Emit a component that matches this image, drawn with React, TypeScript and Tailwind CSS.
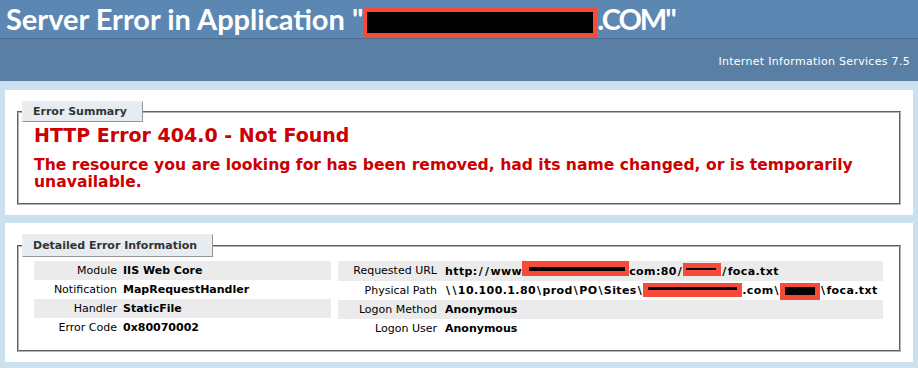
// IIS 7.5 style "Server Error" page, 404.0 with redacted host names

type Row = { label: string; value: React.ReactNode }

function Redact({ w, h, barH, barL, barR, barT, drop = 0 }: { w: number; h: number; barH: number; barL: number; barR: number; barT: number; drop?: number }) {
  return (
    <span className="inline-block bg-[#f74b3a]" style={{ width: w, height: h, verticalAlign: -drop }}>
      <span className="block bg-black" style={{ height: barH, marginLeft: barL, marginRight: barR, marginTop: barT }} />
    </span>
  )
}

// verdana's slashes are much wider than dejavu's
const S = () => <span className="mx-[1px]">/</span>
const B = () => <span className="mx-[1px]">\</span>

const left: Row[] = [
  { label: 'Module', value: 'IIS Web Core' },
  { label: 'Notification', value: 'MapRequestHandler' },
  { label: 'Handler', value: 'StaticFile' },
  { label: 'Error Code', value: '0x80070002' },
]

const right: Row[] = [
  {
    label: 'Requested URL',
    value: (
      <span className="tracking-[0.4px]">
        http:<S /><S />www
        <Redact w={107} h={15} barH={4} barL={7} barR={4} barT={6} drop={1} />
        com:80<S />
        <Redact w={38} h={13} barH={2} barL={3} barR={5} barT={5} drop={1} />
        <S />foca.txt
      </span>
    ),
  },
  {
    label: 'Physical Path',
    value: (
      <span className="tracking-[0.4px]">
        <B /><B />10.100.1.80<B />prod<B />PO<B />Sites<B />
        <Redact w={99} h={14} barH={3} barL={5} barR={5} barT={4} drop={3} />
        .com<B />
        <Redact w={40} h={17} barH={8} barL={5} barR={5} barT={4} drop={6} />
        <B />foca.txt
      </span>
    ),
  },
  { label: 'Logon Method', value: 'Anonymous' },
  { label: 'Logon User', value: 'Anonymous' },
]

function DetailTable({ rows, thW }: { rows: Row[]; thW: string }) {
  return (
    <table className="w-full border-collapse">
      <tbody>
        {rows.map((r, i) => (
          <tr key={r.label} className={i % 2 === 0 ? 'bg-[#ebebeb]' : ''}>
            <th className={`${thW} text-right font-normal align-top h-[19px] py-0 leading-[19px] whitespace-nowrap`}>{r.label}</th>
            <td className="font-bold align-top leading-[19px] whitespace-nowrap">{r.value}</td>
          </tr>
        ))}
      </tbody>
    </table>
  )
}

export default function App() {
  return (
    <div className="min-h-[368px] bg-[#cbe1ef] font-['DejaVu_Sans',Verdana,sans-serif] text-[11px] text-black">
      <div className="h-[38px] bg-[#5c87b2] pl-[6px]">
        <h1 className="m-0 text-white font-['Lato',sans-serif] font-bold text-[29px] leading-[38px] whitespace-nowrap">
          Server Error in Application "
          <span className="inline-block align-[-7px] w-[234px] h-[29px] bg-black border-[4px] border-[#f74b3a]" />
          <span className="tracking-[-2px]">.COM</span>"
        </h1>
      </div>
      <div className="h-[43px] border-t border-[#4a6c8e] bg-[#5a7fa5] flex items-center justify-end pr-[8px] pt-[5px] text-white tracking-[0.3px]">
        Internet Information Services 7.5
      </div>

      <div className="flex flex-col gap-[8px] px-[5px] pt-[9px] pb-[6px]">
        <div className="bg-white h-[125px] px-[12px] pt-[11px]">
          <fieldset className="border-2 [border-style:groove] border-[#b4b4b4] px-[15px] pb-[8px] h-[104px]">
            <legend className="ml-[-12px] pl-[10px] pr-[15px] h-[21px] leading-[19px] bg-[#e7ecf0] border border-t-[#ededed] border-l-[#ededed] border-r-[#969696] border-b-[#969696] text-[#333] font-bold">
              Error Summary
            </legend>
            <h2 className="m-0 mt-[1px] text-[#cc0000] font-bold text-[19px] leading-[24px]">HTTP Error 404.0 - Not Found</h2>
            <h3 className="m-0 mt-[10px] text-[#cc0000] font-bold text-[15.6px] leading-[17px]">
              The resource you are looking for has been removed, had its name changed, or is temporarily unavailable.
            </h3>
          </fieldset>
        </div>

        <div className="bg-white h-[139px] px-[12px] pt-[11px]">
          <fieldset className="border-2 [border-style:groove] border-[#b4b4b4] px-[15px] h-[118px]">
            <legend className="ml-[-12px] pl-[10px] pr-[15px] h-[23px] leading-[21px] bg-[#e7ecf0] border border-t-[#ededed] border-l-[#ededed] border-r-[#969696] border-b-[#969696] text-[#333] font-bold">
              Detailed Error Information
            </legend>
            <div className="flex gap-[7px] mt-[4px]">
              <div className="w-[297px]">
                <DetailTable rows={left} thW="w-[89px] pr-[6px]" />
              </div>
              <div className="w-[545px]">
                <DetailTable rows={right} thW="w-[107px] pr-[8px]" />
              </div>
            </div>
          </fieldset>
        </div>
      </div>
    </div>
  )
}
